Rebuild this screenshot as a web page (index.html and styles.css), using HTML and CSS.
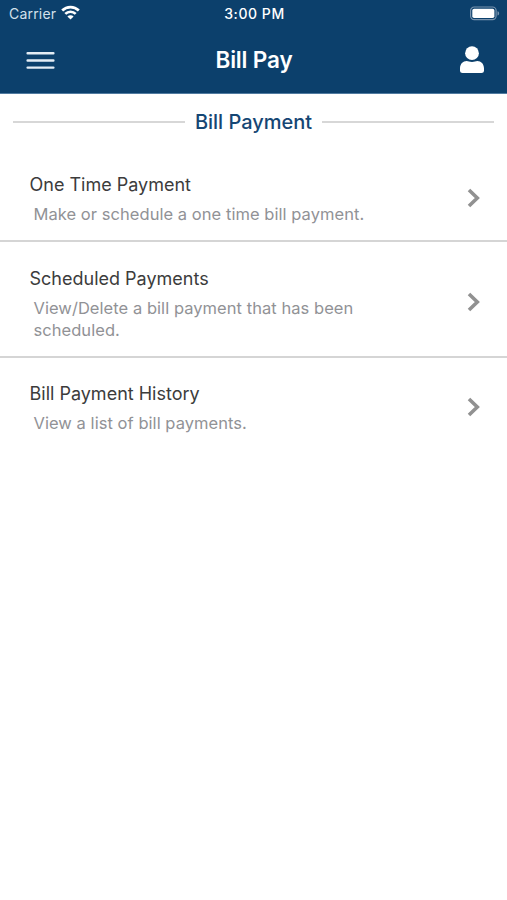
FILE: index.html
```html
<!DOCTYPE html>
<html lang="en">
<head>
<meta charset="utf-8">
<title>Bill Pay</title>
<link rel="stylesheet" href="styles.css">
</head>
<body>
<header class="header">
  <div class="status">
    <div class="carrier"><span class="carrier-name">Carrier</span>
      <svg class="wifi" width="19" height="15" viewBox="0 0 19 15" fill="none" stroke="#fff" stroke-width="2.7">
        <path d="M1.200 5.500a11.800 11.800 0 0 1 16.600 0"/>
        <path d="M4.300 8.900a7.400 7.400 0 0 1 10.400 0"/>
        <path d="M9.500 14.500 6.400 11.500a4.400 4.400 0 0 1 6.200 0z" fill="#fff" stroke="none"/>
      </svg>
    </div>
    <span class="time">3:00 PM</span>
    <svg class="battery" width="31" height="15" viewBox="0 0 31 15">
      <rect x="1.600" y="1" width="25.500" height="12.700" rx="3.600" fill="none" stroke="#7893ae" stroke-width="1.200"/>
      <rect x="3.300" y="2.700" width="22.100" height="9.300" rx="1.800" fill="#fff"/>
      <path d="M28.500 5.200c2.200.6 2.200 3.700 0 4.300z" fill="#7893ae"/>
    </svg>
  </div>
  <nav class="navbar">
    <svg class="menu" width="29" height="19" viewBox="0 0 29 19" stroke="#e4edf5" stroke-width="2.400" stroke-linecap="round">
      <path d="M1.600 2.300h25.800M1.600 9.500h25.800M1.600 16.600h25.800"/>
    </svg>
    <h1 class="title">Bill Pay</h1>
    <svg class="user" width="24" height="28" viewBox="0 0 24 28" fill="#fff">
      <circle cx="12" cy="7.200" r="6.900"/>
      <path d="M0 24.300v-1.900C0 18 3 15 6.700 15c1.800 0 2.600 1 5.300 1s3.500-1 5.300-1C21 15 24 18 24 22.400v1.900A2.500 2.500 0 0 1 21.500 27h-19A2.500 2.500 0 0 1 0 24.300z"/>
    </svg>
  </nav>
</header>
<main>
  <div class="section"><h2 class="section-title">Bill Payment</h2></div>
  <ul class="list">
    <li class="row row-first">
      <div class="copy"><h3 class="name">One Time Payment</h3><p class="desc">Make or schedule a one time bill payment.</p></div>
      <svg class="chevron" width="13" height="20" viewBox="0 0 13 20"><path d="m2 2 8.300 8-8.300 8"/></svg>
    </li>
    <li class="row row-middle">
      <div class="copy"><h3 class="name">Scheduled Payments</h3><p class="desc">View/Delete a bill payment that has been<br>scheduled.</p></div>
      <svg class="chevron" width="13" height="20" viewBox="0 0 13 20"><path d="m2 2 8.300 8-8.300 8"/></svg>
    </li>
    <li class="row row-last">
      <div class="copy"><h3 class="name">Bill Payment History</h3><p class="desc">View a list of bill payments.</p></div>
      <svg class="chevron" width="13" height="20" viewBox="0 0 13 20"><path d="m2 2 8.300 8-8.300 8"/></svg>
    </li>
  </ul>
</main>
</body>
</html>
```
FILE: styles.css
```css
* { box-sizing: border-box; margin: 0; padding: 0; }
body { background: #fff; font-family: Inter, "Liberation Sans", sans-serif; }
svg { display: block; flex: none; }
.header { height: 94px; background: #0c406c; border-bottom: 1px solid #517ba0; color: #fff; }
.status { height: 27px; display: grid; grid-template-columns: 1fr auto 1fr; align-items: center; padding: 0 7px 0 9px; }
.carrier { display: flex; align-items: center; gap: 5px; }
.carrier-name { font-size: 14px; line-height: 20px; letter-spacing: 0.2px; color: #d3e0eb; }
.wifi { margin-top: -2px; }
.time { font-size: 14px; line-height: 20px; font-weight: 500; letter-spacing: 0.55px; }
.battery { justify-self: end; }
.navbar { height: 66px; display: grid; grid-template-columns: 1fr auto 1fr; align-items: center; padding: 0 23px 0 26px; }
.title { font-size: 22.5px; line-height: 28px; font-weight: 600; letter-spacing: -0.15px; margin-right: 2px; }
.user { justify-self: end; }
.section { height: 55px; display: flex; align-items: center; gap: 10px; padding: 0 13px; }
.section::before, .section::after { content: ""; flex: 1; height: 2px; background: #d7d7d7; }
.section-title { font-size: 20px; line-height: 28px; font-weight: 500; color: #154674; }
.list { list-style: none; }
.row { display: flex; align-items: center; justify-content: space-between; padding: 0 27px 0 29.5px; border-bottom: 2px solid #d5d5d5; }
.row-first { height: 93px; padding-top: 6px; }
.row-middle { height: 116px; padding-top: 6px; }
.row-first .copy, .row-middle .copy { padding-top: 2px; }
.row-last { height: 98px; border: 0; }
.name { font-size: 18px; line-height: 26px; font-weight: 400; color: #3c3c3c; }
.desc { padding: 5px 0 0 4px; font-size: 16.5px; line-height: 22px; letter-spacing: 0.05px; color: #919296; }
.chevron { fill: none; stroke: #919191; stroke-width: 3.6; }
```
